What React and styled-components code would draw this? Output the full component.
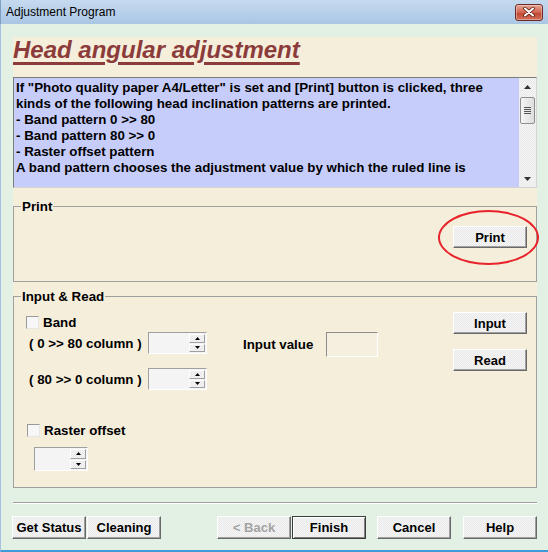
import React from 'react';
import styled, { createGlobalStyle } from 'styled-components';

const GlobalStyle = createGlobalStyle`
  html, body {
    margin: 0;
    padding: 0;
  }
  body {
    font-family: "Liberation Sans", Arial, sans-serif;
    background: #e3f1e4;
    color: #000;
  }
  * {
    box-sizing: border-box;
  }
`;

const dither = 'repeating-conic-gradient(#e9e9e9 0 25%, #f5f5f5 0 50%) 0 0 / 2px 2px';

const Window = styled.div`
  width: 548px;
  height: 552px;
  display: flex;
  flex-direction: column;
  background: #e3f1e4;
  overflow: hidden;
`;

const TitleBar = styled.div`
  height: 24px;
  flex-shrink: 0;
  display: flex;
  align-items: center;
  justify-content: space-between;
  padding: 0 5px 0 5px;
  background: linear-gradient(#c6daef, #aac6e4);
  border-left: 1px solid #7f9fc2;
  font-size: 12px;
`;

const CloseButton = styled.div`
  width: 28px;
  height: 17px;
  display: flex;
  align-items: center;
  justify-content: center;
  border: 1px solid #6e2a22;
  border-radius: 3px;
  background: linear-gradient(#e7a696, #d2634e 50%, #c0452f 51%, #d2705a);
  box-shadow: inset 0 0 0 1px rgba(255, 255, 255, 0.35);
`;

const Frame = styled.div`
  flex: 1;
  display: flex;
  flex-direction: column;
  padding: 13px 11px 0 12px;
  border-left: 1px solid #a6c2df;
  border-bottom: 2px solid #3f9bd8;
`;

const Panel = styled.div`
  display: flex;
  flex-direction: column;
  background: #f5eedb;
`;

const Heading = styled.h1`
  margin: 0;
  height: 40px;
  font-size: 24px;
  line-height: 26px;
  font-weight: bold;
  font-style: italic;
  color: #8c3b3b;
  text-decoration: underline;
  text-decoration-thickness: 3px;
  text-underline-offset: 4px;
`;

const InfoBox = styled.div`
  height: 111px;
  display: flex;
  background: #c6cdfb;
  border: 1px solid;
  border-color: #7d7d7d #d4d4d4 #d4d4d4 #7d7d7d;
`;

const InfoText = styled.div`
  flex: 1;
  padding: 2px 0 0 2px;
  font-size: 13.33px;
  line-height: 16px;
  font-weight: bold;
  overflow: hidden;
  white-space: nowrap;
`;

const ScrollBar = styled.div`
  width: 17px;
  display: flex;
  flex-direction: column;
  background: ${dither};
`;

const ScrollArrow = styled.div`
  height: 17px;
  display: flex;
  align-items: center;
  justify-content: center;
`;

const Thumb = styled.div`
  margin: 2px 1px 0;
  height: 27px;
  border: 1px solid #8e8f8f;
  border-radius: 2px;
  background: linear-gradient(90deg, #f4f4f4, #dedede);
  display: flex;
  flex-direction: column;
  align-items: center;
  justify-content: center;
  gap: 1px;
`;

const Grip = styled.span`
  width: 7px;
  height: 1px;
  background: #555;
`;

const Track = styled.div`
  flex: 1;
`;

const Group = styled.fieldset`
  margin: ${p => p.$top}px 0 0;
  padding: 0;
  min-width: 0;
  border: 1px solid #a0a0a0;
`;

const Legend = styled.legend`
  margin-left: 7px;
  padding: 0 1px;
  font-size: 13.33px;
  line-height: 15px;
  font-weight: bold;
`;

const PrintRow = styled.div`
  display: flex;
  justify-content: flex-end;
  padding: 12px 9px 33px 0;
`;

const Highlight = styled.span`
  position: relative;
  display: inline-flex;
`;

const Ellipse = styled.span`
  position: absolute;
  left: -15px;
  top: -16px;
  width: 101px;
  height: 55px;
  border: 2px solid #e8232b;
  border-radius: 50%;
  pointer-events: none;
`;

const Button = styled.button`
  width: 74px;
  height: ${p => p.$h || 23}px;
  margin: 0 0 0 ${p => p.$gap || 0}px;
  padding: 0;
  font-family: inherit;
  font-size: 13px;
  font-weight: bold;
  color: ${p => (p.disabled ? '#a3a3a3' : '#000')};
  background: ${dither};
  border: 1px solid;
  border-color: ${p => (p.$default ? '#3c3c3c' : '#ffffff #696969 #696969 #ffffff')};
  box-shadow: ${p =>
    p.$default ? 'inset 1px 1px #fff, inset -1px -1px #808080' : 'inset -1px -1px #a0a0a0'};
`;

const InputLayout = styled.div`
  display: flex;
  padding: 0 9px 0 12px;
`;

const LeftCol = styled.div`
  width: 217px;
  display: flex;
  flex-direction: column;
  padding-bottom: 16px;
`;

const CheckRow = styled.label`
  display: flex;
  align-items: center;
  gap: 4px;
  height: 13px;
  margin: ${p => p.$top}px 0 0 ${p => p.$left || 0}px;
  font-size: 13.33px;
  font-weight: bold;
`;

const CheckBox = styled.span`
  width: 13px;
  height: 13px;
  flex-shrink: 0;
  background: #f7f7f7;
  border: 1px solid;
  border-color: #9a9a9a #e6e6e6 #e6e6e6 #9a9a9a;
`;

const SpinRow = styled.div`
  display: flex;
  align-items: center;
  margin: ${p => p.$top}px 0 0 ${p => p.$left || 0}px;
`;

const SpinLabel = styled.span`
  width: 119px;
  font-size: 13.33px;
  font-weight: bold;
  white-space: nowrap;
`;

const SpinBox = styled.div`
  display: flex;
  width: ${p => p.$w}px;
  height: ${p => p.$h}px;
  padding: 1px 1px 1px 0;
  background: #f4f4f4;
  border: 1px solid;
  border-color: #a0a0a0 #fff #fff #a0a0a0;
`;

const SpinField = styled.div`
  flex: 1;
`;

const SpinButtons = styled.div`
  width: 16px;
  display: flex;
  flex-direction: column;
  gap: 1px;
`;

const SpinButton = styled.div`
  flex: 1;
  display: flex;
  align-items: center;
  justify-content: center;
  background: ${dither};
  border: 1px solid;
  border-color: #fff #a0a0a0 #a0a0a0 #fff;
`;

const MiddleCol = styled.div`
  display: flex;
  align-items: center;
  gap: 13px;
  align-self: flex-start;
  margin-top: 28px;
  font-size: 13.33px;
  font-weight: bold;
`;

const ValueBox = styled.div`
  width: 52px;
  height: 25px;
  background: #f5efe0;
  border: 1px solid;
  border-color: #8c8c8c #fff #fff #8c8c8c;
`;

const RightCol = styled.div`
  margin-left: auto;
  display: flex;
  flex-direction: column;
  gap: 15px;
  padding-top: 8px;
`;

const Separator = styled.div`
  margin-top: 14px;
  height: 2px;
  border-top: 1px solid #a0a0a0;
  border-bottom: 1px solid #fff;
`;

const Footer = styled.div`
  display: flex;
  margin: 12px 0 0 -1px;
`;

const Arrow = ({ up }) => (
  <svg width="7" height="4" viewBox="0 0 7 4">
    <path d={up ? 'M0 4 L3.5 0 L7 4 Z' : 'M0 0 L3.5 4 L7 0 Z'} fill="#333" />
  </svg>
);

const TinyArrow = ({ up }) => (
  <svg width="5" height="3" viewBox="0 0 5 3">
    <path d={up ? 'M0 3 L2.5 0 L5 3 Z' : 'M0 0 L2.5 3 L5 0 Z'} fill="#000" />
  </svg>
);

const Spinner = ({ w, h }) => (
  <SpinBox $w={w} $h={h}>
    <SpinField />
    <SpinButtons>
      <SpinButton>
        <TinyArrow up />
      </SpinButton>
      <SpinButton>
        <TinyArrow />
      </SpinButton>
    </SpinButtons>
  </SpinBox>
);

export default function App() {
  return (
    <>
      <GlobalStyle />
      <Window>
        <TitleBar>
          <span>Adjustment Program</span>
          <CloseButton>
            <svg width="12" height="10" viewBox="0 0 12 10">
              <path d="M2 1.5 L10 8.5 M10 1.5 L2 8.5" stroke="#5a1c14" strokeWidth="3.6" strokeLinecap="round" />
              <path d="M2 1.5 L10 8.5 M10 1.5 L2 8.5" stroke="#fff" strokeWidth="2" strokeLinecap="round" />
            </svg>
          </CloseButton>
        </TitleBar>
        <Frame>
          <Panel>
            <Heading>Head angular adjustment</Heading>
            <InfoBox>
              <InfoText>
                If "Photo quality paper A4/Letter" is set and [Print] button is clicked, three
                <br />
                kinds of the following head inclination patterns are printed.
                <br />
                - Band pattern 0 &gt;&gt; 80
                <br />
                - Band pattern 80 &gt;&gt; 0
                <br />
                - Raster offset pattern
                <br />
                A band pattern chooses the adjustment value by which the ruled line is
              </InfoText>
              <ScrollBar>
                <ScrollArrow>
                  <Arrow up />
                </ScrollArrow>
                <Thumb>
                  <Grip />
                  <Grip />
                  <Grip />
                  <Grip />
                </Thumb>
                <Track />
                <ScrollArrow>
                  <Arrow />
                </ScrollArrow>
              </ScrollBar>
            </InfoBox>

            <Group $top={11}>
              <Legend>Print</Legend>
              <PrintRow>
                <Highlight>
                  <Button $h={22}>Print</Button>
                  <Ellipse />
                </Highlight>
              </PrintRow>
            </Group>

            <Group $top={7}>
              <Legend>Input &amp; Read</Legend>
              <InputLayout>
                <LeftCol>
                  <CheckRow $top={12}>
                    <CheckBox />
                    Band
                  </CheckRow>
                  <SpinRow $top={3} $left={3}>
                    <SpinLabel>( 0 &gt;&gt; 80 column )</SpinLabel>
                    <Spinner w={59} h={22} />
                  </SpinRow>
                  <SpinRow $top={14} $left={3}>
                    <SpinLabel>( 80 &gt;&gt; 0 column )</SpinLabel>
                    <Spinner w={59} h={22} />
                  </SpinRow>
                  <CheckRow $top={34} $left={1}>
                    <CheckBox />
                    Raster offset
                  </CheckRow>
                  <SpinRow $top={10} $left={8}>
                    <Spinner w={54} h={24} />
                  </SpinRow>
                </LeftCol>
                <MiddleCol>
                  Input value
                  <ValueBox />
                </MiddleCol>
                <RightCol>
                  <Button $h={22}>Input</Button>
                  <Button $h={22}>Read</Button>
                </RightCol>
              </InputLayout>
            </Group>
          </Panel>

          <Separator />

          <Footer>
            <Button>Get Status</Button>
            <Button $gap={1}>Cleaning</Button>
            <Button $gap={56} disabled>
              &lt; Back
            </Button>
            <Button $gap={1} $default>
              Finish
            </Button>
            <Button $gap={11}>Cancel</Button>
            <Button $gap={12}>Help</Button>
          </Footer>
        </Frame>
      </Window>
    </>
  );
}
